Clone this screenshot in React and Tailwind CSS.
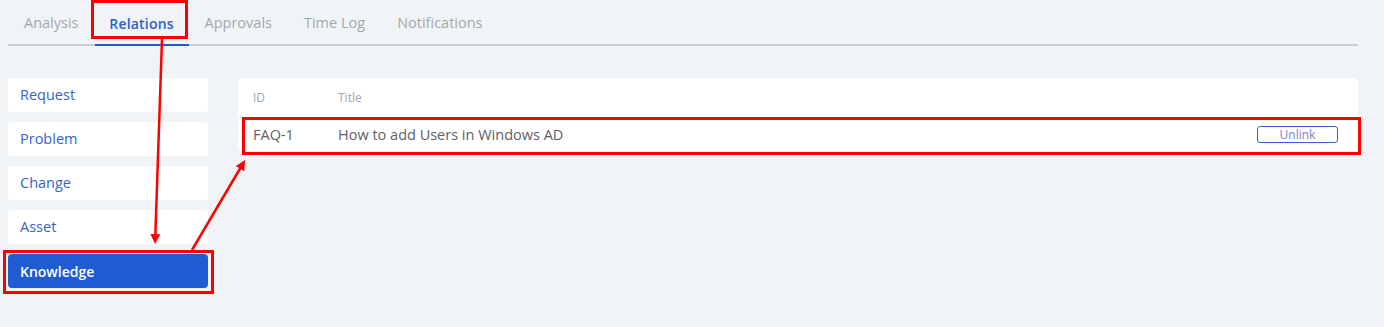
import React from 'react';

const tabs = ['Analysis', 'Relations', 'Approvals', 'Time Log', 'Notifications'];
const kinds = ['Request', 'Problem', 'Change', 'Asset', 'Knowledge'];

const Annotations = () => (
    <svg className="pointer-events-none absolute left-0 top-0" width="1384" height="327">
        <defs>
            <marker id="head" markerWidth="10" markerHeight="10" refX="2" refY="5" orient="auto" markerUnits="userSpaceOnUse">
                <path d="M0,0 L10,5 L0,10 Z" fill="#ff0000" />
            </marker>
        </defs>
        <rect x="92.5" y="1.5" width="94" height="36" fill="none" stroke="#ff0000" strokeWidth="3" />
        <rect x="4.5" y="251.5" width="208" height="41" fill="none" stroke="#ff0000" strokeWidth="3" />
        <rect x="243.5" y="118.5" width="1116" height="35" fill="none" stroke="#ff0000" strokeWidth="3" />
        <line x1="162" y1="39" x2="155.3" y2="236" stroke="#ff0000" strokeWidth="2.5" markerEnd="url(#head)" />
        <line x1="192" y1="250" x2="241" y2="167" stroke="#ff0000" strokeWidth="2.5" markerEnd="url(#head)" />
    </svg>
);

export default function App() {
    return (
        <div className="relative h-[327px] w-[1384px] overflow-hidden bg-[#f0f4f7] font-['Open_Sans',sans-serif]">
            <div className="pl-2 pr-[26px]">
                <div className="flex h-[46px] border-b-2 border-[#c9ced3]">
                    {tabs.map((t) => (
                        <div
                            key={t}
                            className={
                                t === 'Relations'
                                    ? 'relative -mb-[2px] flex w-[94px] items-center justify-center border-b-2 border-[#2059cf] pt-[2px] text-[14px] font-semibold tracking-[0.2px] text-[#2c5fcf]'
                                    : 'flex items-center px-4 pt-[2px] text-[14.5px] text-[#a3a8ad]'
                            }
                        >
                            {t}
                        </div>
                    ))}
                </div>

                <div className="mt-8 flex gap-[30px]">
                    <div className="flex w-[200px] flex-col gap-[10px]">
                        {kinds.map((k) => (
                            <div
                                key={k}
                                className={
                                    k === 'Knowledge'
                                        ? 'flex h-[34px] items-center rounded bg-[#1f5bd1] px-3 text-[14px] font-semibold text-white'
                                        : 'flex h-[34px] items-center rounded bg-white px-3 text-[14.5px] text-[#3563c9]'
                                }
                            >
                                {k}
                            </div>
                        ))}
                    </div>

                    <div className="h-[73px] flex-1 rounded bg-white">
                        <div className="flex h-[41px] items-center border-b border-[#e8ecef] px-[15px] text-[12px] text-[#a0a5aa]">
                            <div className="w-[85px]">ID</div>
                            <div>Title</div>
                        </div>
                        <div className="flex h-[31px] items-center pl-[15px] pr-5 text-[14.5px] text-[#5d6166]">
                            <div className="w-[85px]">FAQ-1</div>
                            <div className="flex-1">How to add Users in Windows AD</div>
                            <button className="flex h-[17px] w-[81px] items-center justify-center rounded-[3px] border border-[#2d62d1] text-[12px] text-[#7d84c9]">
                                Unlink
                            </button>
                        </div>
                    </div>
                </div>
            </div>
            <Annotations />
        </div>
    );
}
